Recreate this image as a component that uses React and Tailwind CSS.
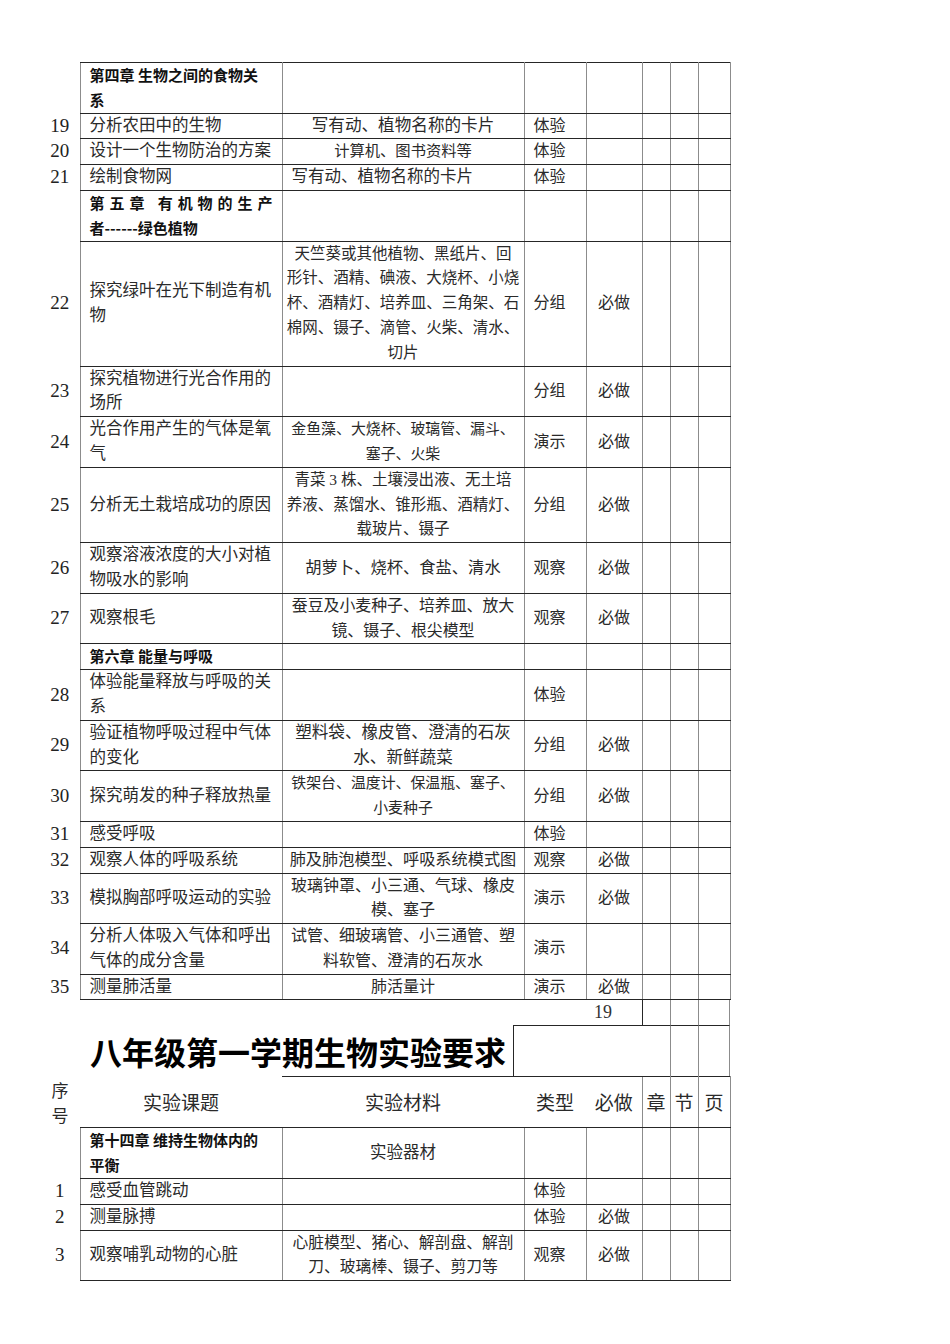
import React from 'react';

const bd = 'border border-x-[#8c8c8c] border-y-[#262626]';

const part1 = [
  { ch: true, topic: ['第四章 生物之间的食物关', '系'] },
  { n: '19', topic: ['分析农田中的生物'], mat: ['写有动、植物名称的卡片'], ms: 'text-[16.6px]', type: '体验' },
  { n: '20', topic: ['设计一个生物防治的方案'], mat: ['计算机、图书资料等'], ms: 'text-[15.3px]', type: '体验' },
  { n: '21', topic: ['绘制食物网'], mat: ['写有动、植物名称的卡片'], ms: 'text-[16.5px]', left: true, type: '体验' },
  { five: true },
  {
    n: '22',
    topic: ['探究绿叶在光下制造有机', '物'],
    mat: ['天竺葵或其他植物、黑纸片、回', '形针、酒精、碘液、大烧杯、小烧', '杯、酒精灯、培养皿、三角架、石', '棉网、镊子、滴管、火柴、清水、', '切片'],
    ms: 'text-[15.5px]',
    type: '分组',
    must: true,
  },
  { n: '23', topic: ['探究植物进行光合作用的', '场所'], type: '分组', must: true },
  { n: '24', topic: ['光合作用产生的气体是氧', '气'], mat: ['金鱼藻、大烧杯、玻璃管、漏斗、', '塞子、火柴'], ms: 'text-[14.9px]', type: '演示', must: true },
  { n: '25', topic: ['分析无土栽培成功的原因'], mat: ['青菜 3 株、土壤浸出液、无土培', '养液、蒸馏水、锥形瓶、酒精灯、', '载玻片、镊子'], ms: 'text-[15.5px]', type: '分组', must: true },
  { n: '26', topic: ['观察溶液浓度的大小对植', '物吸水的影响'], mat: ['胡萝卜、烧杯、食盐、清水'], ms: 'text-[16.3px]', type: '观察', must: true },
  { n: '27', topic: ['观察根毛'], mat: ['蚕豆及小麦种子、培养皿、放大', '镜、镊子、根尖模型'], ms: 'text-[15.9px]', type: '观察', must: true },
  { ch: true, topic: ['第六章 能量与呼吸'] },
  { n: '28', topic: ['体验能量释放与呼吸的关', '系'], type: '体验' },
  { n: '29', topic: ['验证植物呼吸过程中气体', '的变化'], mat: ['塑料袋、橡皮管、澄清的石灰', '水、新鲜蔬菜'], ms: 'text-[16.6px]', type: '分组', must: true },
  { n: '30', topic: ['探究萌发的种子释放热量'], mat: ['铁架台、温度计、保温瓶、塞子、', '小麦种子'], ms: 'text-[14.9px]', type: '分组', must: true },
  { n: '31', topic: ['感受呼吸'], type: '体验' },
  { n: '32', topic: ['观察人体的呼吸系统'], mat: ['肺及肺泡模型、呼吸系统模式图'], ms: 'text-[16.2px]', type: '观察', must: true },
  { n: '33', topic: ['模拟胸部呼吸运动的实验'], mat: ['玻璃钟罩、小三通、气球、橡皮', '模、塞子'], ms: 'text-[16px]', type: '演示', must: true },
  { n: '34', topic: ['分析人体吸入气体和呼出', '气体的成分含量'], mat: ['试管、细玻璃管、小三通管、塑', '料软管、澄清的石灰水'], ms: 'text-[16px]', type: '演示' },
  { n: '35', topic: ['测量肺活量'], mat: ['肺活量计'], ms: 'text-[16px]', type: '演示', must: true },
];

const part2 = [
  { ch: true, topic: ['第十四章 维持生物体内的', '平衡'], mat: ['实验器材'], ms: 'text-[16.5px]' },
  { n: '1', topic: ['感受血管跳动'], type: '体验' },
  { n: '2', topic: ['测量脉搏'], type: '体验', must: true },
  { n: '3', topic: ['观察哺乳动物的心脏'], mat: ['心脏模型、猪心、解剖盘、解剖', '刀、玻璃棒、镊子、剪刀等'], ms: 'text-[15.8px]', type: '观察', must: true },
];

const Cols = () => (
  <colgroup>
    <col className="w-[40px]" />
    <col className="w-[202px]" />
    <col className="w-[242px]" />
    <col className="w-[62px]" />
    <col className="w-[56px]" />
    <col className="w-[28px]" />
    <col className="w-[28px]" />
    <col className="w-[32px]" />
  </colgroup>
);

const Lines = ({ lines }) =>
  lines.map((l, i) => (
    <div key={i} className="whitespace-nowrap">
      {l}
    </div>
  ));

const FiveTitle = () => (
  <div className="font-[family-name:Noto_Sans_CJK_SC,sans-serif] font-bold text-[15px] text-[#111] pr-[9px]">
    <div className="flex justify-between">
      {['第', '五', '章', '\u00a0', '有', '机', '物', '的', '生', '产'].map((c, i) => (
        <span key={i}>{c}</span>
      ))}
    </div>
    <div>者------绿色植物</div>
  </div>
);

const Row = ({ r }) => (
  <tr>
    <td className="p-0 text-center align-middle text-[19px] font-[family-name:Liberation_Serif,serif] text-[#222]">{r.n}</td>
    <td className={`${bd} pl-[9px] pr-0 align-middle`}>
      {r.five ? (
        <FiveTitle />
      ) : r.ch ? (
        <div className="font-[family-name:Noto_Sans_CJK_SC,sans-serif] font-bold text-[15px] text-[#111]">
          <Lines lines={r.topic} />
        </div>
      ) : (
        <div className="text-[16.5px]">
          <Lines lines={r.topic} />
        </div>
      )}
    </td>
    <td className={`${bd} p-0 align-middle ${r.left ? 'text-left pl-[9px]' : 'text-center'} ${r.ms || 'text-[16px]'}`}>
      {r.mat ? <Lines lines={r.mat} /> : null}
    </td>
    <td className={`${bd} pl-[9px] p-0 align-middle text-left text-[16px]`}>{r.type}</td>
    <td className={`${bd} p-0 align-middle text-center text-[16px]`}>{r.must ? '必做' : ''}</td>
    <td className={bd} />
    <td className={bd} />
    <td className={bd} />
  </tr>
);

export default function App() {
  return (
    <div className="bg-white w-[950px] min-h-[1344px] pt-[62px] pl-[40px] text-[#2a2a2a] leading-[24.8px] font-[family-name:Liberation_Serif,Noto_Sans_CJK_SC,serif]">
      <table className="w-[690px] table-fixed border-collapse">
        <Cols />
        <tbody>
          {part1.map((r, i) => (
            <Row key={i} r={r} />
          ))}
        </tbody>
      </table>

      {/* page number row + title */}
      <div className="flex h-[25px]">
        <div className="w-[602px] pl-[554px] text-[18px] leading-[25px] font-[family-name:Liberation_Serif,serif] text-[#333]">19</div>
        <div className="w-[28px] border-l border-l-[#262626]" />
        <div className="w-[28px] border-l border-l-[#8c8c8c]" />
        <div className="w-[32px] border-x border-x-[#8c8c8c]" />
      </div>
      <div className="flex h-[51px]">
        <div className="w-[473px] pl-[50px] flex items-center">
          <h1 className="whitespace-nowrap text-[32px] leading-[40px] font-bold text-black font-[family-name:Noto_Sans_CJK_SC,sans-serif]">
            八年级第一学期生物实验要求
          </h1>
        </div>
        <div className="w-[157px] border-l border-t border-l-[#262626] border-t-[#262626]" />
        <div className="w-[28px] border-l border-t border-l-[#8c8c8c] border-t-[#262626]" />
        <div className="w-[32px] border-x border-t border-x-[#8c8c8c] border-t-[#262626]" />
      </div>

      <table className="w-[690px] table-fixed border-collapse">
        <Cols />
        <tbody>
          <tr className="h-[51px] text-[19px] font-[family-name:Noto_Sans_CJK_SC,sans-serif] text-[#2a2a2a]">
            <td className="p-0 text-center align-middle text-[17px] leading-[25px]">
              序<br />号
            </td>
            <td className="p-0 text-center align-middle border-b border-b-[#262626]">实验课题</td>
            <td className="p-0 text-center align-middle border-y border-y-[#262626]">实验材料</td>
            <td className="p-0 text-right pr-[12px] align-middle border-y border-y-[#262626]">类型</td>
            <td className="p-0 text-center align-middle border-y border-y-[#262626]">必做</td>
            <td className={`${bd} p-0 text-center align-middle`}>章</td>
            <td className={`${bd} p-0 text-center align-middle`}>节</td>
            <td className={`${bd} p-0 text-center align-middle`}>页</td>
          </tr>
          {part2.map((r, i) => (
            <Row key={i} r={r} />
          ))}
        </tbody>
      </table>
    </div>
  );
}
